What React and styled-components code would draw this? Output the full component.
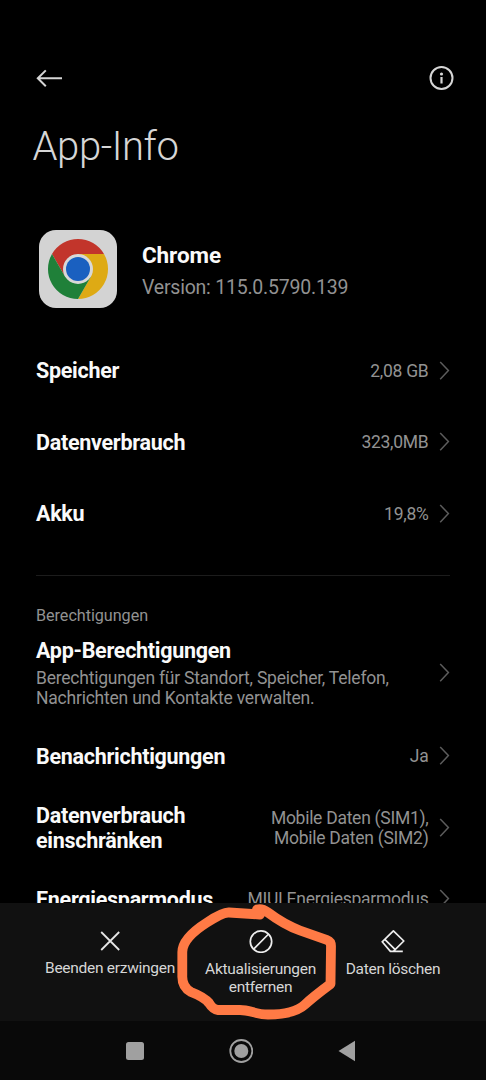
import styled, { createGlobalStyle, css } from "styled-components";

const BLACK = "#000000";
const WHITE = "#fafafa";
const GRAY_100 = "#d6d6d6";
const GRAY_500 = "#929292";
const GRAY_700 = "#5c5c5c";
const ORANGE = "#ff7a45";

const GlobalStyle = createGlobalStyle`
  * {
    box-sizing: border-box;
  }

  body {
    margin: 0;
    background-color: ${BLACK};
    font-family: Roboto, "Liberation Sans", sans-serif;
  }

  svg {
    display: block;
    flex-shrink: 0;
  }
`;

const Screen = styled.div`
  width: 486px;
  height: 1080px;
  display: flex;
  overflow: hidden;
  position: relative;
  flex-direction: column;
  background-color: ${BLACK};
`;

const Content = styled.main`
  height: 903px;
  overflow: hidden;
  padding: 64px 36px 0;
`;

const TopBar = styled.header`
  height: 28px;
  display: flex;
  align-items: center;
  margin-right: -5px;
  justify-content: space-between;
`;

const PageTitle = styled.h1`
  margin: 31px 0 0 -3.5px;
  color: ${GRAY_100};
  font-size: 40px;
  font-weight: 300;
  line-height: 48px;
  letter-spacing: -0.4px;
`;

const AppHeader = styled.section`
  display: flex;
  column-gap: 25px;
  margin: 59px 0 27px 3px;
`;

const AppText = styled.div`
  padding-top: 12px;
`;

const AppName = styled.div`
  color: ${WHITE};
  font-size: 22.5px;
  font-weight: 700;
  line-height: 26px;
  letter-spacing: -0.1px;
`;

const Version = styled.div`
  color: ${GRAY_500};
  font-size: 19.5px;
  margin-top: 8px;
  line-height: 24px;
  letter-spacing: -0.22px;
`;

const Row = styled.div`
  display: flex;
  align-items: center;
  height: ${({ $height }) => $height || "71.5px"};
`;

const RowLabel = styled.div`
  flex: 1;
  color: ${WHITE};
  font-size: 21.5px;
  font-weight: 700;
  line-height: 25px;
  white-space: pre-line;
  letter-spacing: -0.28px;
`;

const RowValue = styled.div`
  color: ${GRAY_500};
  font-size: 17.5px;
  text-align: right;
  line-height: 20px;
  margin-right: 9.5px;
  white-space: pre-line;
  letter-spacing: -0.27px;
`;

const Description = styled.div`
  margin-top: 5px;
  color: ${GRAY_500};
  font-size: 17.5px;
  font-weight: 400;
  line-height: 20px;
  letter-spacing: -0.22px;
`;

const Divider = styled.hr`
  height: 1px;
  border: none;
  margin: 25px 0 0;
  background-color: #1c1c1c;
`;

const SectionLabel = styled.div`
  height: 50px;
  color: ${GRAY_500};
  font-size: 16.2px;
  line-height: 18px;
  padding-top: 31px;
  letter-spacing: -0.05px;
`;

const ActionBar = styled.footer`
  height: 118px;
  display: grid;
  padding: 26px 36px 0 35px;
  background-color: #111111;
  grid-template-columns: 150px 151px 114px;
`;

const Action = styled.div`
  display: flex;
  align-items: center;
  flex-direction: column;
`;

const ActionLabel = styled.div`
  color: ${GRAY_100};
  font-size: 15.5px;
  margin-top: 8px;
  line-height: 17.5px;
  text-align: center;
  white-space: pre;
  letter-spacing: -0.28px;

  ${({ $raised }) =>
    $raised &&
    css`
      margin-top: 7px;
    `}
`;

const NavBar = styled.nav`
  height: 59px;
  display: flex;
  column-gap: 85px;
  padding-left: 126px;
  align-items: center;
  background-color: #090909;
`;

const HomeSquare = styled.div`
  width: 18px;
  height: 18px;
  border-radius: 2.5px;
  background-color: #a0a0a0;
`;

const Annotation = styled.svg`
  top: 903px;
  left: 170px;
  position: absolute;
`;

const BackIcon = () => (
  <svg width="27" height="20" fill="none" stroke={GRAY_100} strokeWidth="2">
    <path d="M26 10.3H2M9.8 2.4L1.8 10.3l8 7.9" />
  </svg>
);

const InfoIcon = () => (
  <svg width="26" height="26" fill="none" stroke={GRAY_100}>
    <circle cx="12.5" cy="13" r="11" strokeWidth="2" />
    <path d="M12.5 12v6.5" strokeWidth="2.2" />
    <circle cx="12.5" cy="9" r="1.6" fill={GRAY_100} stroke="none" />
  </svg>
);

const ChromeIcon = () => (
  <svg width="78" height="78" viewBox="39 230 78 78">
    <rect x="39" y="230" width="78" height="78" rx="17" fill="#d3d3d3" />
    <path d="M52 254A30 30 0 0 1 104 254H78L65 276.5Z" fill="#c2352b" />
    <path d="M104 254A30 30 0 0 1 78 299L91 276.5L78 254Z" fill="#deaa14" />
    <path d="M78 299A30 30 0 0 1 52 254L65 276.5H91Z" fill="#1f8039" />
    <circle cx="78" cy="269" r="15" fill="#d8d8d8" />
    <circle cx="78" cy="269" r="12" fill="#1a60c0" />
  </svg>
);

const Chevron = () => (
  <svg width="12" height="20" fill="none" stroke={GRAY_700} strokeWidth="1.5">
    <path d="M2.2 1l8.2 8.6l-8.2 8.6" />
  </svg>
);

const CloseIcon = () => (
  <svg width="24" height="24" fill="none" stroke="#e6e6e6" strokeWidth="1.8">
    <path d="M3.2 3l18 18M21.2 3l-18 18" />
  </svg>
);

const BanIcon = () => (
  <svg width="24" height="24" fill="none" stroke="#eeeeee" strokeWidth="1.7">
    <circle cx="12" cy="12.6" r="10.7" />
    <path d="M4.6 20.2L19.6 5" />
  </svg>
);

const EraserIcon = () => (
  <svg
    width="24"
    height="24"
    fill="none"
    stroke="#eeeeee"
    strokeWidth="1.7"
    strokeLinejoin="round"
  >
    <path d="M21.8 22.4H9.4L1.2 12.8L12.4 1.8L22.8 12L12.6 22.2M3.8 10.4L14.2 20.6" />
  </svg>
);

const settings = [
  { label: "Speicher", value: "2,08 GB" },
  { label: "Datenverbrauch", value: "323,0MB" },
  { label: "Akku", value: "19,8%" },
];

const permissions = [
  { label: "Benachrichtigungen", value: "Ja" },
  {
    label: "Datenverbrauch\neinschränken",
    value: "Mobile Daten (SIM1),\nMobile Daten (SIM2)",
  },
  { label: "Energiesparmodus", value: "MIUI Energiesparmodus" },
];

const SettingRow = ({ label, value }) => (
  <Row>
    <RowLabel>{label}</RowLabel>
    <RowValue>{value}</RowValue>
    <Chevron />
  </Row>
);

const App = () => (
  <>
    <GlobalStyle />
    <Screen>
      <Content>
        <TopBar>
          <BackIcon />
          <InfoIcon />
        </TopBar>
        <PageTitle>App-Info</PageTitle>

        <AppHeader>
          <ChromeIcon />
          <AppText>
            <AppName>Chrome</AppName>
            <Version>Version: 115.0.5790.139</Version>
          </AppText>
        </AppHeader>

        {settings.map(item => (
          <SettingRow key={item.label} {...item} />
        ))}

        <Divider />
        <SectionLabel>Berechtigungen</SectionLabel>

        <Row $height="95px">
          <RowLabel>
            App-Berechtigungen
            <Description>
              Berechtigungen für Standort, Speicher, Telefon,
              <br />
              Nachrichten und Kontakte verwalten.
            </Description>
          </RowLabel>
          <Chevron />
        </Row>

        {permissions.map(item => (
          <SettingRow key={item.label} {...item} />
        ))}
      </Content>

      <ActionBar>
        <Action>
          <CloseIcon />
          <ActionLabel $raised>Beenden erzwingen</ActionLabel>
        </Action>
        <Action>
          <BanIcon />
          <ActionLabel>{"Aktualisierungen\nentfernen"}</ActionLabel>
        </Action>
        <Action>
          <EraserIcon />
          <ActionLabel>Daten löschen</ActionLabel>
        </Action>
      </ActionBar>

      <NavBar>
        <HomeSquare />
        <svg width="24" height="24" fill="#a0a0a0">
          <circle cx="12.3" cy="12" r="11" fill="none" stroke="#a0a0a0" strokeWidth="1.8" />
          <circle cx="12.3" cy="12" r="7" />
        </svg>
        <svg width="18" height="22" fill="#a0a0a0">
          <path d="M0.5 11L17 0.7V21.3Z" />
        </svg>
      </NavBar>

      <Annotation
        width="175"
        height="120"
        viewBox="170 903 175 120"
        fill="none"
        stroke={ORANGE}
        strokeWidth="9.8"
        strokeLinecap="round"
        strokeLinejoin="round"
      >
        <path d="M260 914.5L229 912.5Q223 912 207 922.5Q182.5 938 182.3 952V976Q182 987 191 992Q204 997 209 1003Q213 1009.5 218 1010H240C250 1010 256 1014.5 268 1014.5C285 1014.5 297 1012 305 1004.5Q313 997 330.5 984L331 946Q331 941.5 327 940L300 930.5C288 926 278 920 268 912.5Q262 908 257 909.5L260 914" />
      </Annotation>
    </Screen>
  </>
);

export default App;
